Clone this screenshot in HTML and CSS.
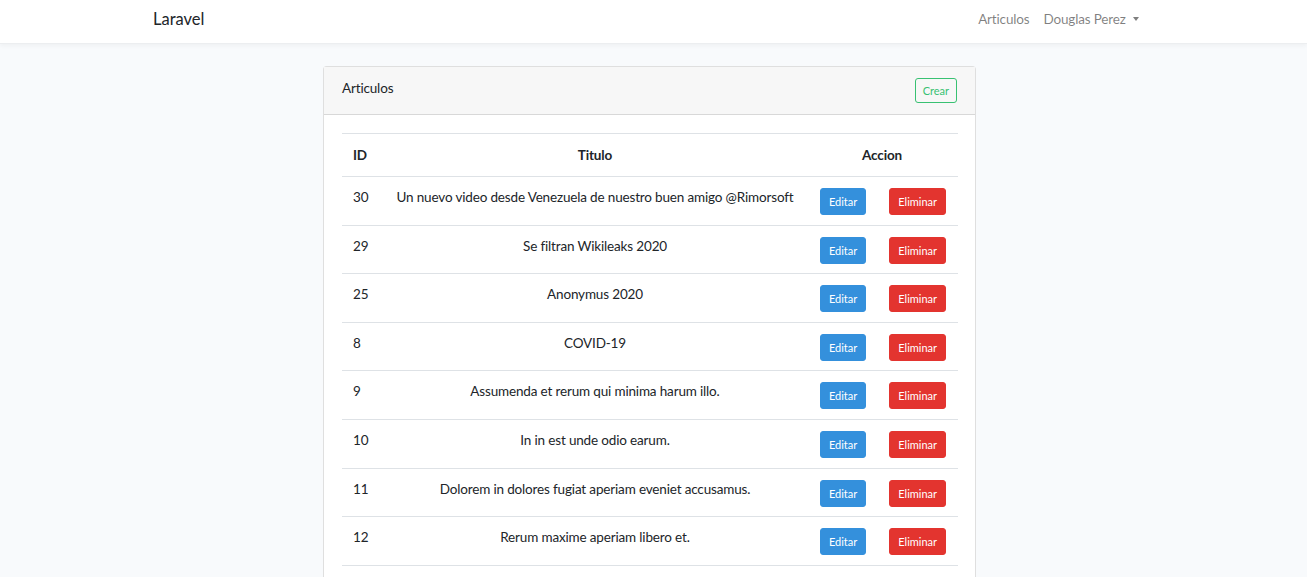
FILE: index.html
```html
<!DOCTYPE html>
<html lang="es">
<head>
<meta charset="utf-8">
<title>Laravel</title>
<link rel="stylesheet" href="styles.css">
</head>
<body>
<nav class="navbar">
  <div class="nav-inner">
    <a class="brand">Laravel</a>
    <ul class="nav-right">
      <li><a class="nav-link">Articulos</a></li>
      <li><a class="nav-link dropdown">Douglas Perez <span class="caret"></span></a></li>
    </ul>
  </div>
</nav>
<main class="main">
  <div class="card">
    <div class="card-header">
      <span class="card-title">Articulos</span>
      <a class="btn btn-outline-success">Crear</a>
    </div>
    <div class="card-body">
      <table class="table">
        <colgroup><col class="c-id"><col class="c-title"><col class="c-act"></colgroup>
        <thead>
          <tr><th class="left">ID</th><th>Titulo</th><th>Accion</th></tr>
        </thead>
        <tbody>
          <tr><td class="left">30</td><td>Un nuevo video desde Venezuela de nuestro buen amigo @Rimorsoft</td><td><div class="actions"><a class="btn btn-primary">Editar</a><button class="btn btn-danger">Eliminar</button></div></td></tr>
          <tr><td class="left">29</td><td>Se filtran Wikileaks 2020</td><td><div class="actions"><a class="btn btn-primary">Editar</a><button class="btn btn-danger">Eliminar</button></div></td></tr>
          <tr><td class="left">25</td><td>Anonymus 2020</td><td><div class="actions"><a class="btn btn-primary">Editar</a><button class="btn btn-danger">Eliminar</button></div></td></tr>
          <tr><td class="left">8</td><td>COVID-19</td><td><div class="actions"><a class="btn btn-primary">Editar</a><button class="btn btn-danger">Eliminar</button></div></td></tr>
          <tr><td class="left">9</td><td>Assumenda et rerum qui minima harum illo.</td><td><div class="actions"><a class="btn btn-primary">Editar</a><button class="btn btn-danger">Eliminar</button></div></td></tr>
          <tr><td class="left">10</td><td>In in est unde odio earum.</td><td><div class="actions"><a class="btn btn-primary">Editar</a><button class="btn btn-danger">Eliminar</button></div></td></tr>
          <tr><td class="left">11</td><td>Dolorem in dolores fugiat aperiam eveniet accusamus.</td><td><div class="actions"><a class="btn btn-primary">Editar</a><button class="btn btn-danger">Eliminar</button></div></td></tr>
          <tr><td class="left">12</td><td>Rerum maxime aperiam libero et.</td><td><div class="actions"><a class="btn btn-primary">Editar</a><button class="btn btn-danger">Eliminar</button></div></td></tr>
        </tbody>
      </table>
    </div>
  </div>
</main>
</body>
</html>
```
FILE: styles.css
```css
* { box-sizing: border-box; }
html, body { margin: 0; padding: 0; }
body {
  background: #f8fafc;
  font-family: Lato, "Noto Sans", sans-serif;
  font-size: 13.5px;
  letter-spacing: -0.16px;
  line-height: 1.66;
  color: #212529;
}
.navbar {
  background: #fff;
  height: 44px;
  box-shadow: 0 2px 4px rgba(0,0,0,.04);
  border-bottom: 1px solid #eceef0;
}
.nav-inner {
  width: 986px;
  margin: 0 0 0 153px;
  height: 43px;
  display: flex;
  align-items: center;
  justify-content: space-between;
}
.brand {
  font-size: 16.5px;
  letter-spacing: 0;
  color: #212529;
  margin-top: -4px;
}
.nav-right {
  list-style: none;
  margin: 0;
  padding: 0;
  display: flex;
  gap: 14px;
  margin-top: -4px;
}
.nav-link {
  color: rgba(0,0,0,.5);
  font-size: 13.5px;
}
.caret {
  display: inline-block;
  width: 0; height: 0;
  margin-left: 4px;
  vertical-align: 3px;
  border-top: 4px solid rgba(0,0,0,.5);
  border-left: 3.5px solid transparent;
  border-right: 3.5px solid transparent;
}
.main {
  padding-top: 22px;
  display: flex;
  justify-content: center;
  padding-right: 8px;
}
.card {
  width: 653px;
  background: #fff;
  border: 1px solid rgba(0,0,0,.125);
  border-radius: 4px;
}
.card-header {
  height: 48px;
  background: #f7f7f7;
  border-bottom: 1px solid rgba(0,0,0,.125);
  display: flex;
  align-items: flex-start;
  justify-content: space-between;
  padding: 10px 18px 0 18px;
}
.card-title {
  font-size: 13.5px;
}
.btn {
  display: inline-block;
  font-family: inherit;
  font-size: 11px;
  letter-spacing: 0;
  line-height: 17px;
  padding: 4px 8px;
  border-radius: 3px;
  border: 1px solid transparent;
  cursor: pointer;
  white-space: nowrap;
}
.btn-outline-success {
  color: #38c172;
  border-color: #38c172;
  margin-top: 1px;
  padding: 3px 7px;
}
.btn-primary { background: #3490dc; border-color: #3490dc; color: #fff; }
.btn-danger { background: #e3342f; border-color: #e3342f; color: #fff; }
.card-body { padding: 18px 18px 40px 18px; }
.table {
  width: 616px;
  border-collapse: collapse;
  table-layout: fixed;
}
.c-id { width: 42px; }
.c-title { width: 422px; }
.c-act { width: 152px; }
.table th, .table td {
  border-top: 1px solid #dee2e6;
  border-bottom: 1px solid #dee2e6;
  text-align: center;
  vertical-align: top;
  padding: 9px 0 0 0;
  height: 48.6px;
  white-space: nowrap;
}
.table thead th {
  font-weight: 700;
  padding-top: 10px;
  height: 43px;
}
.table .left { text-align: left; padding-left: 11px; }
.actions {
  display: flex;
  justify-content: center;
  gap: 23px;
  padding-top: 2px;
  padding-left: 2px;
}
```
